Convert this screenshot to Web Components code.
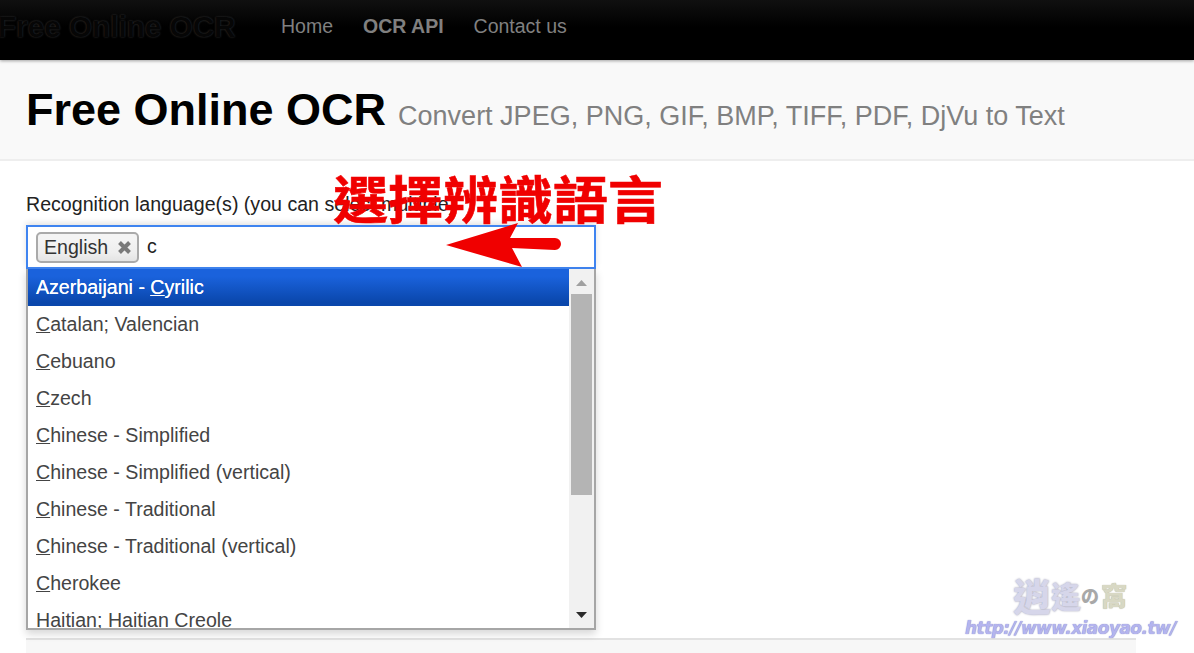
<!DOCTYPE html>
<html lang="en">
<head>
<meta charset="utf-8">
<title>Free Online OCR</title>
<style>
    html, body { margin: 0; padding: 0; background: #fff; }
    body { position: relative; height: 653px; overflow: hidden; font-family: "Liberation Sans", Arial, sans-serif; }
</style>
</head>
<body>
<ocr-navbar brand="Free Online OCR">
    <a href="#">Home</a>
    <a href="#" class="active">OCR API</a>
    <a href="#">Contact us</a>
</ocr-navbar>
<ocr-header title="Free Online OCR" subtitle="Convert JPEG, PNG, GIF, BMP, TIFF, PDF, DjVu to Text"></ocr-header>
<ocr-main>
    <span slot="label">Recognition language(s) (you can select multiple)</span>
    <lang-select>
        <lang-option selected><span>Azerbaijani - <u>C</u>yrilic</span></lang-option>
        <lang-option><span><u>C</u>atalan; Valencian</span></lang-option>
        <lang-option><span><u>C</u>ebuano</span></lang-option>
        <lang-option><span><u>C</u>zech</span></lang-option>
        <lang-option><span><u>C</u>hinese - Simplified</span></lang-option>
        <lang-option><span><u>C</u>hinese - Simplified (vertical)</span></lang-option>
        <lang-option><span><u>C</u>hinese - Traditional</span></lang-option>
        <lang-option><span><u>C</u>hinese - Traditional (vertical)</span></lang-option>
        <lang-option><span><u>C</u>herokee</span></lang-option>
        <lang-option><span>Haitian; Haitian <u>C</u>reole</span></lang-option>
    </lang-select>
</ocr-main>
<red-note text="選擇辨識語言"></red-note>
<site-mark></site-mark>

<script>
class OcrNavbar extends HTMLElement {
    constructor() {
        super();
        this.attachShadow({ mode: 'open' });
    }
    connectedCallback() {
        this.shadowRoot.innerHTML = `
            <style>
                :host {
                    display: flex;
                    align-items: center;
                    height: 60px;
                    padding-bottom: 7px;
                    box-sizing: border-box;
                    background: linear-gradient(#101010, #000 45%);
                    box-shadow: 0 1px 3px rgba(0, 0, 0, .35);
                    position: relative;
                    overflow: hidden;
                }
                .brand {
                    margin-left: -2px;
                    width: 283px;
                    flex: none;
                    font-size: 29.7px;
                    font-weight: bold;
                    color: #060606;
                    text-shadow: 0 0 2px #3a3a3a;
                    white-space: nowrap;
                }
                nav { display: flex; gap: 30px; font-size: 19.5px; }
                ::slotted(a) { color: #808080; text-decoration: none; }
                ::slotted(a.active) { font-weight: bold; }
            </style>
            <div class="brand">${this.getAttribute('brand')}</div>
            <nav><slot></slot></nav>
        `;
    }
}

class OcrHeader extends HTMLElement {
    constructor() {
        super();
        this.attachShadow({ mode: 'open' });
    }
    connectedCallback() {
        this.shadowRoot.innerHTML = `
            <style>
                :host {
                    display: flex;
                    align-items: baseline;
                    gap: 12px;
                    box-sizing: border-box;
                    height: 101px;
                    padding: 25px 26px 0;
                    background: #f9f9f9;
                    border-bottom: 2px solid #eee;
                    white-space: nowrap;
                }
                h1 { margin: 0; font-size: 45px; line-height: 50px; color: #000; }
                small { font-size: 27px; color: #808080; }
            </style>
            <h1>${this.getAttribute('title')}</h1>
            <small>${this.getAttribute('subtitle')}</small>
        `;
    }
}

class OcrMain extends HTMLElement {
    constructor() {
        super();
        this.attachShadow({ mode: 'open' });
    }
    connectedCallback() {
        this.shadowRoot.innerHTML = `
            <style>
                :host {
                    display: block;
                    padding: 31px 58px 0 26px;
                    font-size: 19.6px;
                    color: #222;
                }
                .label { line-height: 24px; margin-bottom: 9px; }
                .well {
                    height: 40px;
                    margin-top: 369px;
                    background: #f7f7f7;
                    border-top: 2px solid #e2e2e2;
                }
            </style>
            <div class="label"><slot name="label"></slot></div>
            <slot></slot>
            <div class="well"></div>
        `;
    }
}

class LangSelect extends HTMLElement {
    constructor() {
        super();
        this.attachShadow({ mode: 'open' });
    }
    connectedCallback() {
        this.shadowRoot.innerHTML = `
            <style>
                :host { display: block; position: relative; width: 570px; }
                .box {
                    box-sizing: border-box;
                    height: 44px;
                    display: flex;
                    align-items: center;
                    gap: 8px;
                    padding: 0 8px;
                    background: #fff;
                    border: 2px solid #3f84f0;
                    box-shadow: 0 -2px 6px rgba(0, 0, 0, .12);
                }
                .chip {
                    box-sizing: border-box;
                    height: 31px;
                    width: 103px;
                    display: flex;
                    align-items: center;
                    justify-content: space-between;
                    padding: 0 5px 0 6px;
                    border: 2px solid #aaa;
                    border-radius: 5px;
                    background: linear-gradient(#f4f4f4 20%, #eee 70%, #e4e4e4);
                    color: #333;
                }
                .chip svg { display: block; }
                .typed { color: #222; position: relative; top: -1px; }
                .drop {
                    position: absolute;
                    top: 44px;
                    left: 0;
                    right: 0;
                    height: 361px;
                    box-sizing: border-box;
                    display: flex;
                    background: #fff;
                    border: 2px solid #a6a6a6;
                    border-top: 0;
                    box-shadow: 0 4px 8px rgba(0, 0, 0, .16);
                    overflow: hidden;
                }
                .list { flex: 1; min-width: 0; }
                .bar {
                    flex: none;
                    width: 25px;
                    background: #f1f1f1;
                    display: flex;
                    flex-direction: column;
                    align-items: center;
                }
                .bar svg { flex: none; display: block; }
                .thumb { flex: none; width: 21px; height: 201px; background: #b4b4b4; }
                .rest { flex: 1; }
            </style>
            <div class="box">
                <div class="chip">
                    <span>English</span>
                    <svg width="15" height="15" viewBox="0 0 15 15"><path d="M2.5 2.5 12.5 12.5M12.5 2.5 2.5 12.5" stroke="#7a7a7a" stroke-width="4"/></svg>
                </div>
                <span class="typed">c</span>
            </div>
            <div class="drop">
                <div class="list"><slot></slot></div>
                <div class="bar">
                    <svg width="25" height="25" viewBox="0 0 25 25"><path d="M7 17 12.5 11 18 17z" fill="#a0a0a0"/></svg>
                    <div class="thumb"></div>
                    <div class="rest"></div>
                    <svg width="25" height="25" viewBox="0 0 25 25"><path d="M7 9 18 9 12.5 15z" fill="#2b2b2b"/></svg>
                </div>
            </div>
        `;
    }
}

class LangOption extends HTMLElement {
    constructor() {
        super();
        this.attachShadow({ mode: 'open' });
    }
    connectedCallback() {
        this.shadowRoot.innerHTML = `
            <style>
                :host {
                    display: flex;
                    align-items: center;
                    box-sizing: border-box;
                    height: 37px;
                    padding-left: 8px;
                    color: #444;
                    white-space: nowrap;
                }
                :host([selected]) {
                    color: #fff;
                    margin-left: -1px;
                    padding-left: 9px;
                    background: linear-gradient(#1a62dc 20%, #0a47ac 90%);
                    text-shadow: 0 0 .5px #fff;
                }
            </style>
            <slot></slot>
        `;
    }
}

// the red note and arrow are painted on top of the screenshot
class RedNote extends HTMLElement {
    constructor() {
        super();
        this.attachShadow({ mode: 'open' });
    }
    connectedCallback() {
        this.shadowRoot.innerHTML = `
            <style>
                :host { position: absolute; left: 0; top: 0; width: 0; height: 0; }
                .note {
                    position: absolute;
                    left: 333px;
                    top: 156px;
                    font: 700 55px/80px "Noto Sans CJK TC", "Noto Sans CJK SC", sans-serif;
                    color: #f00000;
                    white-space: nowrap;
                    -webkit-text-stroke: .6px #f00000;
                    transform: scaleY(.93);
                    transform-origin: 50% 45px;
                }
                svg { position: absolute; left: 440px; top: 215px; }
            </style>
            <div class="note">${this.getAttribute('text')}</div>
            <svg width="130" height="60" viewBox="0 0 130 60">
                <path d="M6 30 L78 8 L70 23 L115 23 A6 6 0 0 1 115 35 L72 33 L82 52 Z" fill="#f00000"/>
            </svg>
        `;
    }
}

class SiteMark extends HTMLElement {
    constructor() {
        super();
        this.attachShadow({ mode: 'open' });
    }
    connectedCallback() {
        this.shadowRoot.innerHTML = `
            <style>
                :host {
                    position: absolute;
                    left: 965px;
                    top: 572px;
                    width: 213px;
                    white-space: nowrap;
                }
                .cn {
                    display: flex;
                    align-items: center;
                    height: 46px;
                    padding-left: 48px;
                    font: 900 30px/46px "Noto Sans CJK TC", sans-serif;
                    color: #d6d6ea;
                    text-shadow: 0 0 2px #9a9ab0;
                }
                .big { font-size: 38px; }
                .no { font-size: 18px; color: #a8a8a8; text-shadow: none; }
                .nest { font-size: 26px; color: #d8d8c4; text-shadow: 0 0 1px #a5a58c; margin-left: 2px; }
                .url {
                    font: italic bold 17px/20px "DejaVu Sans", sans-serif;
                    letter-spacing: -.55px;
                    color: #b4b4ee;
                    text-shadow: 0 0 1px #6c6cb8;
                }
            </style>
            <div class="cn"><span class="big">逍</span><span>遙</span><span class="no">の</span><span class="nest">窩</span></div>
            <div class="url">http://www.xiaoyao.tw/</div>
        `;
    }
}

customElements.define('ocr-navbar', OcrNavbar);
customElements.define('ocr-header', OcrHeader);
customElements.define('ocr-main', OcrMain);
customElements.define('lang-select', LangSelect);
customElements.define('lang-option', LangOption);
customElements.define('red-note', RedNote);
customElements.define('site-mark', SiteMark);
</script>
</body>
</html>
